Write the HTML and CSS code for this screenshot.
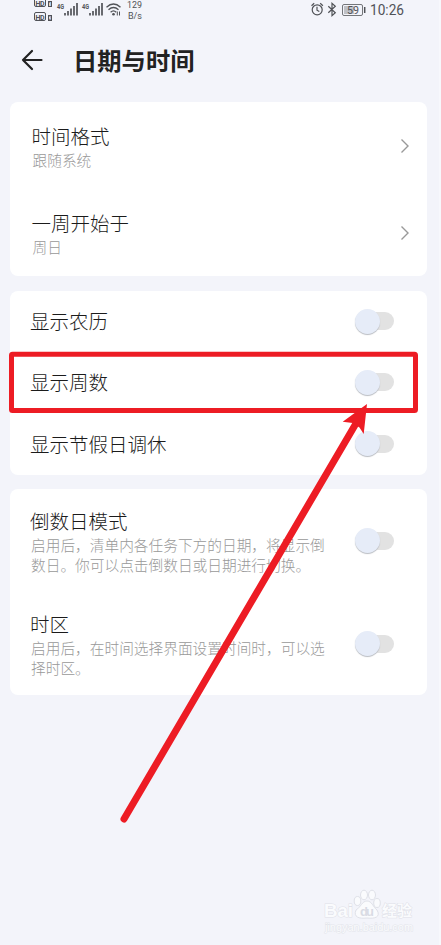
FILE: index.html
```html
<!DOCTYPE html>
<html lang="zh-CN">
<head>
<meta charset="utf-8">
<title>日期与时间</title>
<link rel="stylesheet" href="styles.css">
</head>
<body>
<div class="screen">
  <div class="status">
    <svg class="status-left" width="126" height="24" viewBox="0 0 126 24">
      <g fill="none" stroke="#505257" stroke-width="1"><rect x="3.5" y="-1.5" width="11" height="8" rx="1.5"/><rect x="3.5" y="12.5" width="11" height="8" rx="1.5"/><rect x="17.5" y="1.5" width="3" height="5"/><rect x="17.5" y="15.5" width="3" height="5"/></g>
      <g class="tiny"><text x="4.5" y="5.6" textLength="9">HD</text><text x="4.5" y="19.6" textLength="9">HD</text></g>
      <g class="micro"><text x="17.6" y="6">1</text><text x="17.6" y="20">2</text></g>
      <g class="net"><text x="26" y="8.5" textLength="7" lengthAdjust="spacingAndGlyphs">4G</text><text x="51" y="8.5" textLength="7" lengthAdjust="spacingAndGlyphs">4G</text></g>
      <path d="M34 13v2.5M37 11v4.5M40 8.500v7M43 6v9.500M46 3v12.500M59 13v2.500M62 11v4.500M65 8.500v7M68 6v9.500M71 3v12.500" stroke="#505257" stroke-width="1.700"/>
      <g fill="none" stroke="#505257" stroke-width="1.300"><path d="M75.500 7.200Q82.500 0.800 89.500 7.200M77.500 9.700Q82.500 5.200 87.500 9.700M79.600 12.200Q82.500 9.600 85.200 12.200"/></g>
      <circle cx="82.500" cy="14.300" r="1.300" fill="#505257"/>
      <path d="M86.300 15.500v-4M88.500 11.500v4" stroke="#505257"/>
      <g class="rate"><text x="96" y="8.300" textLength="15" lengthAdjust="spacingAndGlyphs">129</text><text x="97" y="18.800" textLength="14" lengthAdjust="spacingAndGlyphs">B/s</text></g>
    </svg>
    <svg class="status-right" width="96" height="20" viewBox="0 0 96 20">
      <g fill="none" stroke="#505257" stroke-width="1.200"><circle cx="7.200" cy="9.800" r="5"/><path d="M7 6.800v3.400l2.300 1.300M1.500 5.700l2.700-2.500M10.200 3.200l2.700 2.500"/><path d="M18.300 6.200l7 6.500-3.300 3V3.300l3.300 3-7 6.500"/></g>
      <rect x="32.500" y="4.500" width="20" height="11" rx="1.500" fill="none" stroke="#74767a"/><rect x="34" y="6" width="10" height="8" fill="#bfc1c6"/><path d="M54.700 7v6" stroke="#505257" stroke-width="1.500"/>
      <text class="battery" x="37" y="13.600" textLength="12" lengthAdjust="spacingAndGlyphs">59</text>
      <text class="clock" x="60" y="14.800" textLength="34" lengthAdjust="spacingAndGlyphs">10:26</text>
    </svg>
  </div>
  <header class="header">
    <svg width="22" height="22" viewBox="0 0 22 22" fill="none" stroke="#222" stroke-width="2.200" stroke-linecap="round" stroke-linejoin="round"><path d="M20.500 11H2M11 2L2 11l9 9"/></svg>
    <h1>日期与时间</h1>
  </header>
  <main class="cards">
    <section class="card">
      <div class="row tall"><div class="copy"><h2>时间格式</h2><p>跟随系统</p></div><svg class="chevron" width="10" height="16" viewBox="0 0 10 16"><path d="M1.500 1.500L8 8l-6.500 6.500"/></svg></div>
      <div class="row tall"><div class="copy"><h2>一周开始于</h2><p>周日</p></div><svg class="chevron" width="10" height="16" viewBox="0 0 10 16"><path d="M1.500 1.500L8 8l-6.500 6.500"/></svg></div>
    </section>
    <section class="card switches">
      <div class="row"><h2>显示农历</h2><span class="toggle"></span></div>
      <div class="row"><h2>显示周数</h2><span class="toggle"></span></div>
      <div class="row"><h2>显示节假日调休</h2><span class="toggle"></span></div>
    </section>
    <section class="card modes">
      <div class="row"><div class="copy"><h2>倒数日模式</h2><p>启用后，清单内各任务下方的日期，将显示倒<br>数日。你可以点击倒数日或日期进行切换。</p></div><span class="toggle"></span></div>
      <div class="row"><div class="copy"><h2>时区</h2><p>启用后，在时间选择界面设置时间时，可以选<br>择时区。</p></div><span class="toggle"></span></div>
    </section>
  </main>
  <svg class="annotation" width="441" height="945" viewBox="0 0 441 945">
    <rect x="11.500" y="354.300" width="404" height="56.200" rx="1" fill="none" stroke="#ed1c24" stroke-width="5"/>
    <path d="M124 819L358 420" stroke="#ed1c24" stroke-width="7" stroke-linecap="round"/>
    <path d="M367 404L342.700 421.700L352.700 423L359.500 427.500L363.700 434Z" fill="#ed1c24"/>
  </svg>
  <svg class="watermark" width="100" height="50" viewBox="0 0 100 50">
    <g fill="#fafbfd" stroke="#dfe1e8" stroke-width="1"><ellipse cx="17.500" cy="12" rx="3.300" ry="4.500"/><ellipse cx="24" cy="6" rx="3.500" ry="4.800"/><ellipse cx="32" cy="6" rx="3.500" ry="4.800"/><ellipse cx="37" cy="14" rx="3.300" ry="4.500"/><path d="M27 12C32 12 33 18 37 21C41 28 35 30 27 29C19 30 13 28 16 21C21 18 22 12 27 12Z"/></g>
    <text class="brand" x="-16" y="28" textLength="29" lengthAdjust="spacingAndGlyphs">Bai</text>
    <text class="brand du" x="20" y="27" textLength="14">du</text>
    <text class="brand cn" x="42" y="27" textLength="30">经验</text>
    <text class="site" x="-15" y="42" textLength="88" lengthAdjust="spacingAndGlyphs">jingyan.baidu.com</text>
  </svg>
</div>
</body>
</html>
```
FILE: styles.css
```css
* { box-sizing: border-box; }
body { margin: 0; background: #f3f4fa; font-family: "Noto Sans CJK SC", sans-serif; color: #1b1b1b; }
h1, h2, p { margin: 0; }
svg { flex: none; display: block; }
.screen { position: relative; height: 945px; overflow: hidden; border-right: 2px solid #f7f8fc; }
.status { display: flex; justify-content: space-between; height: 24px; padding: 0 33px 0 31px; }
.status text { font-family: Roboto, sans-serif; fill: #505257; }
.tiny text { font-size: 7px; font-weight: 700; }
.micro text { font-size: 5px; }
.net text { font-size: 7px; font-weight: 700; }
.rate text { font-size: 9.5px; }
.status .battery { font-size: 11px; }
.status .clock { font-size: 14.5px; }
.header { display: flex; align-items: center; gap: 30px; height: 72px; padding-left: 21px; }
.header h1 { font-size: 24.3px; line-height: 36px; font-weight: 700; color: #222; }
.cards { display: flex; flex-direction: column; gap: 14.500px; width: 417px; margin: 6px 0 0 10px; }
.card { background: #fff; border-radius: 8px; height: 174px; display: grid; grid-auto-rows: 1fr; }
.switches { height: 184px; }
.modes { height: 206px; }
.row { display: flex; align-items: center; justify-content: space-between; padding: 0 33px 0 20px; }
.tall { padding: 0 17px 0 21.500px; }
h2 { font-size: 19.5px; line-height: 28px; font-weight: 300; white-space: nowrap; }
p { font-size: 14.700px; line-height: 20px; font-weight: 300; color: #999; white-space: nowrap; padding-left: 1px; }
.chevron path { fill: none; stroke: #999; stroke-width: 1.400; }
.toggle { flex: none; width: 36px; height: 18px; border-radius: 9px; background: #e2e2e2; display: flex; align-items: center; }
.toggle::before { content: ""; flex: none; width: 25px; height: 25px; margin-left: -3px; border-radius: 50%; background: #e6ecf8; box-shadow: 0 1px 1px #b9bcc2; }
.annotation { position: absolute; left: 0; top: 0; }
.watermark { position: absolute; left: 340px; top: 889px; overflow: visible; }
.brand { font-family: "Liberation Sans", "Noto Sans CJK SC", sans-serif; font-size: 19px; font-weight: 700; fill: #fafbfd; stroke: #dfe1e8; stroke-width: 1px; paint-order: stroke; }
.du { font-size: 13px; fill: #d9dce4; stroke: none; }
.cn { font-size: 15px; }
.site { font-family: "Liberation Sans", sans-serif; font-size: 10px; fill: #fafbfd; stroke: #e3e5eb; stroke-width: 1px; paint-order: stroke; }
```
